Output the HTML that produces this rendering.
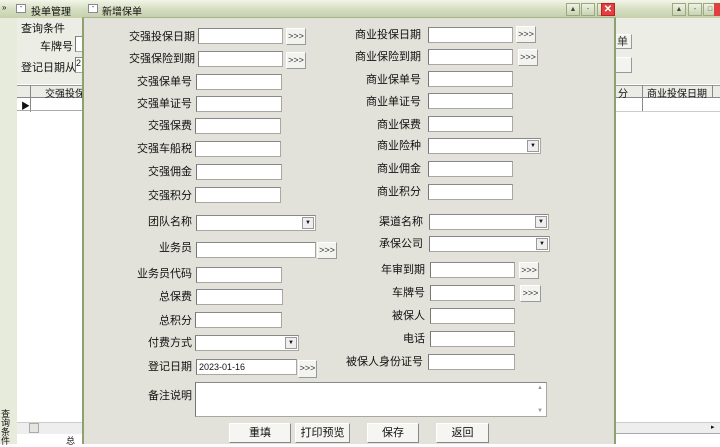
<!DOCTYPE html>
<html><head><meta charset="utf-8"><style>
*{margin:0;padding:0;box-sizing:border-box}
body{width:720px;height:444px;overflow:hidden;position:relative;background:#fff;font-family:"Liberation Sans","Noto Sans CJK SC","WenQuanYi Zen Hei",sans-serif;font-size:11px;color:#111}
.a{position:absolute}
.tb{background:linear-gradient(#f2f5e8,#d7dfc3 50%,#c6d0ad);}
.in{position:absolute;height:16px;background:#fff;border:1px solid #a8a8a0;border-left-color:#777;border-top-color:#888}
.bt{position:absolute;height:17px;background:#f3f3ef;border:1px solid #fff;border-right-color:#999;border-bottom-color:#999;font-size:9px;text-align:center;line-height:14px;color:#333}
.lb{position:absolute;text-align:right;white-space:nowrap;font-size:11px;line-height:14px}
.dd{position:absolute;right:1px;top:1px;width:12px;height:12px;background:#eee;border:1px solid #999;font-size:6px;line-height:10px;text-align:center}
.wb{position:absolute;top:3px;width:14px;height:13px;border:1px solid #9aa884;background:linear-gradient(#eef2e2,#c9d3b2);font-size:7px;text-align:center;line-height:11px;color:#444}
.bb{position:absolute;height:20px;background:#f5f5f1;border:1px solid #fff;border-right-color:#888;border-bottom-color:#888;text-align:center;line-height:18px;font-size:11px}
</style></head><body>
<div class="a" style="left:0;top:0;width:17px;height:444px;background:#e6ebdb"></div>
<div class="a tb" style="left:0;top:0;width:84px;height:18px"></div>
<div class="a" style="left:2px;top:3px;font-size:8px">»</div>
<div class="a" style="left:16px;top:4px;width:10px;height:9px;border:1px solid #889;background:#fff;font-size:7px;line-height:6px;text-align:center">-</div>
<div class="a" style="left:31px;top:3px;font-size:10px">投单管理</div>
<div class="a" style="left:17px;top:18px;width:67px;height:66px;background:#eceee6"></div>
<div class="a" style="left:21px;top:20px;font-size:11px">查询条件</div>
<div class="a" style="left:40px;top:38px">车牌号</div>
<div class="in" style="left:75px;top:36px;width:12px"></div>
<div class="a" style="left:21px;top:59px">登记日期从</div>
<div class="in" style="left:75px;top:57px;width:12px;font-size:9px">2</div>
<div class="a" style="left:17px;top:85px;width:67px;height:13px;background:#ecece6;border-bottom:1px solid #888;border-top:1px solid #999"></div>
<div class="a" style="left:30px;top:85px;width:1px;height:27px;background:#888"></div>
<div class="a" style="left:45px;top:85px;font-size:10px">交强投保</div>
<div class="a" style="left:17px;top:98px;width:67px;height:13px;border-bottom:1px solid #aaa"></div>
<div class="a" style="left:21px;top:99px;font-size:9px">▶</div>
<div class="a" style="left:17px;top:422px;width:67px;height:12px;background:#eee;border-top:1px solid #ccc"></div>
<div class="a" style="left:29px;top:423px;width:10px;height:10px;background:#e4e4e0;border:1px solid #aaa"></div>
<div class="a" style="left:1px;top:410px;width:12px;font-size:9px;line-height:9px">查询条件</div>
<div class="a" style="left:66px;top:434px;font-size:9px">总</div>
<div class="a tb" style="left:616px;top:0;width:104px;height:18px"></div>
<div class="wb" style="left:672px">▲</div><div class="wb" style="left:688px">-</div><div class="wb" style="left:703px">□</div>
<div class="a" style="left:714px;top:3px;width:8px;height:13px;background:#e04040"></div>
<div class="a" style="left:616px;top:18px;width:104px;height:66px;background:#eceee6"></div>
<div class="bt" style="left:612px;top:34px;width:20px;height:15px;font-size:11px;text-align:left;padding-left:4px">单</div>
<div class="bt" style="left:612px;top:57px;width:20px;height:16px"></div>
<div class="a" style="left:616px;top:85px;width:104px;height:13px;background:#ecece6;border-top:1px solid #999;border-bottom:1px solid #888"></div>
<div class="a" style="left:618px;top:85px;font-size:10px">分</div>
<div class="a" style="left:642px;top:85px;width:1px;height:27px;background:#888"></div>
<div class="a" style="left:647px;top:85px;font-size:10px">商业投保日期</div>
<div class="a" style="left:712px;top:85px;width:1px;height:13px;background:#888"></div>
<div class="a" style="left:616px;top:111px;width:104px;height:1px;background:#ccc"></div>
<div class="a" style="left:616px;top:422px;width:104px;height:12px;background:#eee;border-top:1px solid #ccc;border-bottom:1px solid #aaa"></div>
<div class="a" style="left:711px;top:423px;font-size:7px">▸</div>
<div class="a" style="left:82px;top:0;width:534px;height:444px;background:#e2e2da;border-left:2px solid #8da070;border-right:2px solid #8da070"></div>
<div class="a tb" style="left:82px;top:0;width:534px;height:18px;border-bottom:1px solid #a5b38a"></div>
<div class="a" style="left:88px;top:4px;width:10px;height:9px;border:1px solid #889;background:#fff;font-size:7px;line-height:6px;text-align:center">-</div>
<div class="a" style="left:102px;top:3px;font-size:10px">新增保单</div>
<div class="wb" style="left:566px">▲</div><div class="wb" style="left:581px">-</div><div class="wb" style="left:597px">□</div>
<div class="a" style="left:601px;top:3px;width:14px;height:13px;background:#e24040;border:1px solid #b22;color:#fff;font-size:10px;line-height:11px;text-align:center;font-weight:bold">✕</div>

<div class="lb" style="right:525px;top:30px">交强投保日期</div><div class="in" style="left:198px;top:28px;width:85px"></div><div class="bt" style="left:286px;top:28px;width:20px">&gt;&gt;&gt;</div>
<div class="lb" style="right:525px;top:52px">交强保险到期</div><div class="in" style="left:198px;top:51px;width:85px"></div><div class="bt" style="left:286px;top:52px;width:20px">&gt;&gt;&gt;</div>
<div class="lb" style="right:528px;top:75px">交强保单号</div><div class="in" style="left:196px;top:74px;width:86px"></div>
<div class="lb" style="right:528px;top:97px">交强单证号</div><div class="in" style="left:196px;top:96px;width:86px"></div>
<div class="lb" style="right:528px;top:119px">交强保费</div><div class="in" style="left:195px;top:118px;width:86px"></div>
<div class="lb" style="right:528px;top:142px">交强车船税</div><div class="in" style="left:195px;top:141px;width:86px"></div>
<div class="lb" style="right:528px;top:165px">交强佣金</div><div class="in" style="left:196px;top:164px;width:86px"></div>
<div class="lb" style="right:528px;top:189px">交强积分</div><div class="in" style="left:195px;top:187px;width:86px"></div>
<div class="lb" style="right:528px;top:215px">团队名称</div><div class="in" style="left:196px;top:215px;width:120px"><div class="dd">▼</div></div>
<div class="lb" style="right:528px;top:241px">业务员</div><div class="in" style="left:196px;top:242px;width:120px"></div><div class="bt" style="left:317px;top:242px;width:20px">&gt;&gt;&gt;</div>
<div class="lb" style="right:528px;top:267px">业务员代码</div><div class="in" style="left:196px;top:267px;width:86px"></div>
<div class="lb" style="right:528px;top:290px">总保费</div><div class="in" style="left:196px;top:289px;width:87px"></div>
<div class="lb" style="right:528px;top:314px">总积分</div><div class="in" style="left:195px;top:312px;width:87px"></div>
<div class="lb" style="right:528px;top:336px">付费方式</div><div class="in" style="left:195px;top:335px;width:104px"><div class="dd">▼</div></div>
<div class="lb" style="right:528px;top:360px">登记日期</div><div class="in" style="left:196px;top:359px;width:101px;font-size:9px;padding-left:2px;line-height:14px">2023-01-16</div><div class="bt" style="left:298px;top:360px;width:19px;height:18px">&gt;&gt;&gt;</div>
<div class="lb" style="right:528px;top:389px">备注说明</div><div class="in" style="left:195px;top:382px;width:352px;height:35px"><div class="a" style="right:3px;top:2px;font-size:6px;color:#999">▲</div><div class="a" style="right:3px;bottom:2px;font-size:6px;color:#999">▼</div></div>
<div class="lb" style="right:299px;top:28px">商业投保日期</div><div class="in" style="left:428px;top:27px;width:85px"></div><div class="bt" style="left:516px;top:26px;width:20px">&gt;&gt;&gt;</div>
<div class="lb" style="right:299px;top:50px">商业保险到期</div><div class="in" style="left:428px;top:49px;width:85px"></div><div class="bt" style="left:518px;top:49px;width:20px">&gt;&gt;&gt;</div>
<div class="lb" style="right:299px;top:73px">商业保单号</div><div class="in" style="left:428px;top:71px;width:85px"></div>
<div class="lb" style="right:299px;top:95px">商业单证号</div><div class="in" style="left:428px;top:93px;width:85px"></div>
<div class="lb" style="right:299px;top:118px">商业保费</div><div class="in" style="left:428px;top:116px;width:85px"></div>
<div class="lb" style="right:299px;top:139px">商业险种</div><div class="in" style="left:428px;top:138px;width:113px"><div class="dd">▼</div></div>
<div class="lb" style="right:299px;top:162px">商业佣金</div><div class="in" style="left:428px;top:161px;width:85px"></div>
<div class="lb" style="right:299px;top:185px">商业积分</div><div class="in" style="left:428px;top:184px;width:85px"></div>
<div class="lb" style="right:297px;top:215px">渠道名称</div><div class="in" style="left:429px;top:214px;width:120px"><div class="dd">▼</div></div>
<div class="lb" style="right:297px;top:237px">承保公司</div><div class="in" style="left:429px;top:236px;width:121px"><div class="dd">▼</div></div>
<div class="lb" style="right:295px;top:263px">年审到期</div><div class="in" style="left:430px;top:262px;width:85px"></div><div class="bt" style="left:519px;top:262px;width:20px">&gt;&gt;&gt;</div>
<div class="lb" style="right:295px;top:286px">车牌号</div><div class="in" style="left:430px;top:285px;width:85px"></div><div class="bt" style="left:520px;top:285px;width:21px">&gt;&gt;&gt;</div>
<div class="lb" style="right:295px;top:309px">被保人</div><div class="in" style="left:430px;top:308px;width:85px"></div>
<div class="lb" style="right:295px;top:332px">电话</div><div class="in" style="left:430px;top:331px;width:85px"></div>
<div class="lb" style="right:297px;top:355px">被保人身份证号</div><div class="in" style="left:428px;top:354px;width:87px"></div>
<div class="bb" style="left:229px;top:423px;width:62px">重填</div>
<div class="bb" style="left:295px;top:423px;width:55px">打印预览</div>
<div class="bb" style="left:367px;top:423px;width:52px">保存</div>
<div class="bb" style="left:436px;top:423px;width:53px">返回</div>
</body></html>
